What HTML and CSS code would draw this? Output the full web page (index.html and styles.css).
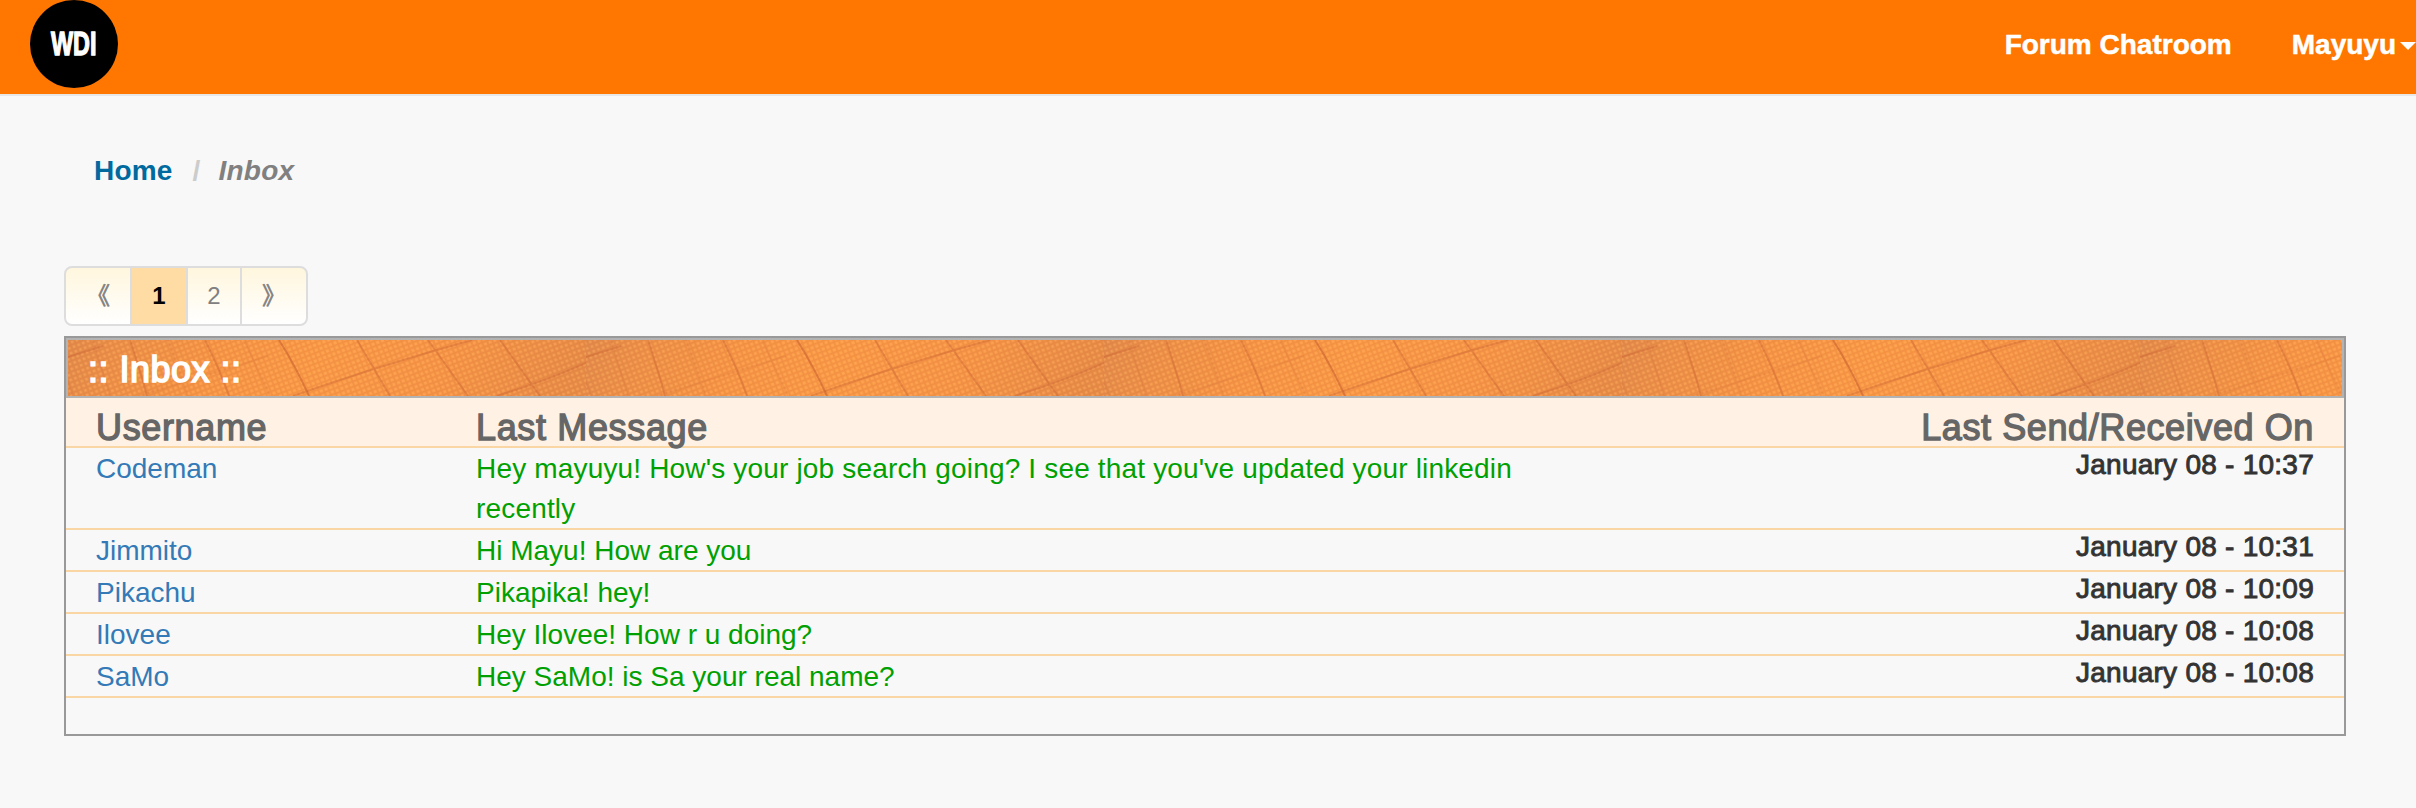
FILE: index.html
```html
<!DOCTYPE html>
<html lang="en">
<head>
<meta charset="utf-8">
<title>Inbox</title>
<link rel="stylesheet" href="styles.css">
</head>
<body>
<header class="navbar">
  <svg class="logo" width="88" height="88" viewBox="0 0 88 88">
    <circle cx="44" cy="44" r="44" fill="#000"/>
    <text class="logo-text" x="21" y="54.5" textLength="45.5" lengthAdjust="spacingAndGlyphs">WDI</text>
  </svg>
  <nav class="nav">
    <a class="nav-link">Forum Chatroom</a>
    <a class="nav-link user">Mayuyu<span class="caret"></span></a>
  </nav>
</header>
<main class="page">
  <div class="breadcrumb"><a class="home">Home</a><span class="slash">/</span><em>Inbox</em></div>
  <div class="pagination">
    <a class="page-item prev">《</a><a class="page-item current">1</a><a class="page-item two">2</a><a class="page-item next">》</a>
  </div>
  <section class="inbox">
    <div class="title">
      <svg class="texture" width="100%" height="100%">
        <defs>
          <linearGradient id="shade" x1="0" x2="1" y1="0" y2="0.05">
            <stop offset="0" stop-color="#e28c4d"/>
            <stop offset=".13" stop-color="#ef9349"/>
            <stop offset=".3" stop-color="#f99846"/>
            <stop offset=".5" stop-color="#fd9d47"/>
            <stop offset=".75" stop-color="#f99847"/>
            <stop offset="1" stop-color="#e88e49"/>
          </linearGradient>
          <pattern id="weave" width="5" height="5" patternUnits="userSpaceOnUse" patternTransform="rotate(-21)">
            <path d="M0 .8H5M.8 0V5" stroke="#d6743a" stroke-opacity=".28" stroke-width="1.5"/>
            <circle cx="3.2" cy="3.2" r="1.2" fill="#ffab5c" fill-opacity=".5"/>
          </pattern>
          <pattern id="cloth" width="518" height="56" patternUnits="userSpaceOnUse">
            <rect width="518" height="56" fill="url(#shade)"/>
            <rect width="518" height="56" fill="url(#weave)"/>
            <g fill="none" stroke="#c9602f" stroke-width="2" stroke-opacity=".4">
              <path d="M62 0Q72 30 79 56M137 0Q151 28 161 56"/>
              <path d="M211 0Q228 27 241 56" stroke-opacity=".6"/>
              <path d="M289 0L322 56M360 0L400 56M432 0L472 56M0 17L35 6M225 56Q310 26 404 0M429 56Q480 40 518 23"/>
              <path d="M25 0L42 56M71 56L200 16M0 42L5 56M100 0L120 56M176 0L202 56" stroke-opacity=".15"/>
            </g>
          </pattern>
        </defs>
        <rect width="100%" height="100%" fill="url(#cloth)"/>
      </svg>
      <span class="title-text">:: Inbox ::</span>
    </div>
    <div class="row head"><span>Username</span><span>Last Message</span><span class="date">Last Send/Received On</span></div>
    <div class="row"><a class="name">Codeman</a><a class="message long">Hey mayuyu! How's your job search going? I see that you've updated your linkedin recently</a><span class="date">January 08 - 10:37</span></div>
    <div class="row"><a class="name">Jimmito</a><a class="message">Hi Mayu! How are you</a><span class="date">January 08 - 10:31</span></div>
    <div class="row"><a class="name">Pikachu</a><a class="message">Pikapika! hey!</a><span class="date">January 08 - 10:09</span></div>
    <div class="row"><a class="name">Ilovee</a><a class="message">Hey Ilovee! How r u doing?</a><span class="date">January 08 - 10:08</span></div>
    <div class="row"><a class="name">SaMo</a><a class="message">Hey SaMo! is Sa your real name?</a><span class="date">January 08 - 10:08</span></div>
  </section>
</main>
</body>
</html>
```

FILE: styles.css
```css
* { box-sizing: border-box; }
body {
  margin: 0;
  min-height: 808px;
  background: #f8f8f8;
  color: #333;
  font: 28px/40px "Liberation Sans", Arial, sans-serif;
}
.navbar {
  display: flex;
  justify-content: space-between;
  height: 96px;
  padding-left: 30px;
  background: #ff7600;
  border-bottom: 2px solid #e7e7e7;
}
.logo-text {
  font: bold 34px "Liberation Sans", Arial, sans-serif;
  fill: #fff;
  stroke: #fff;
  stroke-width: 1.4px;
}
.nav {
  display: flex;
  gap: 60px;
  padding-top: 25px;
  color: #fff;
  font-weight: bold;
  -webkit-text-stroke: .5px #fff;
}
.user { display: flex; }
.caret {
  margin: 17px 0 0 4px;
  height: 0;
  border: 8px solid transparent;
  border-top-color: #fff;
  border-bottom: 0;
}
.page { padding: 55px 70px 0 64px; }
.breadcrumb {
  display: flex;
  height: 115px;
  padding-left: 30px;
  font-weight: bold;
  color: #808080;
  letter-spacing: .2px;
}
.home { color: #006a9e; }
.slash { margin: 0 18px 0 20px; color: #ccc; }
.pagination {
  display: flex;
  width: 244px;
  height: 60px;
  overflow: hidden;
  border: 2px solid #ddd;
  border-radius: 8px;
  background: linear-gradient(#fff6dd, #fff);
  color: #808080;
  font: 24px/56px "Liberation Sans", "Noto Sans CJK SC", sans-serif;
}
.page-item { text-align: center; border-right: 2px solid #ddd; }
.prev { width: 66px; -webkit-text-stroke: .6px #808080; }
.current { width: 56px; background: #ffdca3; color: #000; font-weight: bold; }
.two { width: 54px; }
.next { width: 64px; border-right: 0; -webkit-text-stroke: .6px #808080; }
.inbox {
  height: 400px;
  margin-top: 10px;
  border: 2px solid #999;
}
.title {
  position: relative;
  height: 60px;
  border: 2px solid #b3b3b3;
  padding: 2px 0 0 20px;
  color: #fff;
  font-size: 36px;
  line-height: 56px;
  letter-spacing: .5px;
  -webkit-text-stroke: 1.6px #fff;
}
.texture { position: absolute; inset: 0; }
.title-text { position: relative; }
.row {
  display: grid;
  grid-template-columns: 380px 1110px 1fr;
  padding: 1px 30px 0 30px;
  border-bottom: 2px solid #fbd6a5;
}
.row > * { margin-bottom: -1px; }
.row > .message { margin-bottom: 0; height: 39px; }
.row > .long { height: 79px; letter-spacing: .17px; }
.head {
  height: 50px;
  padding-top: 10px;
  background: #fff2e4;
  color: #666;
  font-size: 36px;
  letter-spacing: .65px;
  -webkit-text-stroke: 1.3px #666;
}
.name { color: #337ab7; height: 39px; }
.message { color: #00a000; }
.date {
  height: 32px;
  line-height: 32px;
  letter-spacing: .25px;
  text-align: right;
  -webkit-text-stroke: .9px #333;
}
.head .date { line-height: 40px; letter-spacing: .6px; -webkit-text-stroke: 1.3px #666; }
```
